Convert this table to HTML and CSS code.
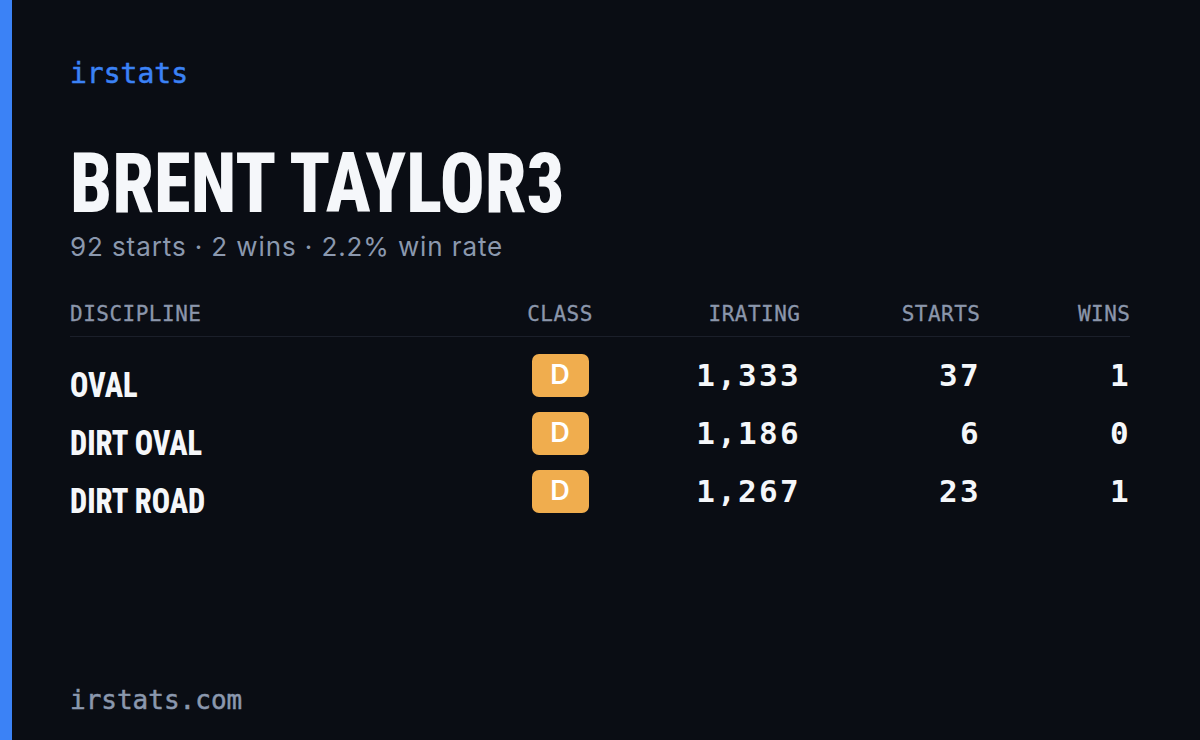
FILE: index.html
```html
<!DOCTYPE html>
<html lang="en">
<head>
<meta charset="utf-8">
<title>irstats – Brent Taylor3</title>
<link rel="stylesheet" href="styles.css">
</head>
<body>
<main class="card">
  <div class="logo">irstats</div>
  <h1 class="name">BRENT TAYLOR3</h1>
  <p class="summary">92 starts · 2 wins · 2.2% win rate</p>
  <section class="table">
    <div class="row head">
      <span class="c-disc">DISCIPLINE</span>
      <span class="c-class">CLASS</span>
      <span class="c-num">IRATING</span>
      <span class="c-num">STARTS</span>
      <span class="c-num">WINS</span>
    </div>
    <div class="body">
      <div class="row">
        <span class="c-disc disc">OVAL</span>
        <span class="c-class"><span class="badge">D</span></span>
        <span class="c-num num">1,333</span>
        <span class="c-num num">37</span>
        <span class="c-num num">1</span>
      </div>
      <div class="row">
        <span class="c-disc disc">DIRT OVAL</span>
        <span class="c-class"><span class="badge">D</span></span>
        <span class="c-num num">1,186</span>
        <span class="c-num num">6</span>
        <span class="c-num num">0</span>
      </div>
      <div class="row">
        <span class="c-disc disc">DIRT ROAD</span>
        <span class="c-class"><span class="badge">D</span></span>
        <span class="c-num num">1,267</span>
        <span class="c-num num">23</span>
        <span class="c-num num">1</span>
      </div>
    </div>
  </section>
  <footer class="footer">irstats.com</footer>
</main>
</body>
</html>
```

FILE: styles.css
```css
html, body {
  margin: 0;
  padding: 0;
  background: #0a0d14;
}

.card {
  box-sizing: border-box;
  width: 1200px;
  height: 740px;
  border-left: 12px solid #3b82f6;
  padding: 56px 70px 25px 58px;
  display: flex;
  flex-direction: column;
  color: #f5f7fa;
}

.logo {
  font-family: "DejaVu Sans Mono", "Liberation Mono", monospace;
  font-size: 28px;
  line-height: 36px;
  color: #3b82f6;
  -webkit-text-stroke: 0.5px #3b82f6;
}

.name {
  margin: 50px 0 0;
  font-family: "Roboto Condensed", Roboto, sans-serif;
  font-stretch: condensed;
  font-weight: 800;
  font-size: 84px;
  line-height: 84px;
  color: #f5f7fa;
  transform: scaleX(0.89);
  transform-origin: left center;
}

.summary {
  margin: 5px 0 0;
  font-family: Inter, "Noto Sans", sans-serif;
  font-size: 26px;
  letter-spacing: 0.9px;
  line-height: 32px;
  color: #8b98ae;
}

.table {
  margin-top: 39px;
}

.row {
  display: grid;
  grid-template-columns: 440px 100px 190px 180px 150px;
  align-items: center;
  height: 43px;
}

.head {
  height: auto;
  font-family: "DejaVu Sans Mono", "Liberation Mono", monospace;
  font-size: 21px;
  letter-spacing: 0.5px;
  line-height: 24px;
  color: #8b96ab;
  -webkit-text-stroke: 0.3px #8b96ab;
  padding-bottom: 10px;
  border-bottom: 1px solid #1b1f2a;
}

.head .c-num {
  margin-right: -0.5px;
}

.body {
  display: flex;
  flex-direction: column;
  gap: 15px;
  margin-top: 17px;
}

.c-class {
  display: flex;
  justify-content: center;
}

.c-num {
  text-align: right;
}

.disc {
  align-self: end;
  font-family: "Roboto Condensed", Roboto, sans-serif;
  font-stretch: condensed;
  font-weight: 800;
  font-size: 35px;
  line-height: 23px;
  transform: scaleX(0.87);
  transform-origin: left bottom;
}

.num {
  font-family: "DejaVu Sans Mono", "Liberation Mono", monospace;
  font-size: 31px;
  letter-spacing: 2.3px;
  margin-right: -1px;
  line-height: 43px;
  font-weight: 700;
  color: #f5f7fa;
}

.badge {
  width: 57px;
  height: 43px;
  border-radius: 7px;
  background: #f0ad4e;
  color: #ffffff;
  font-family: Inter, "Noto Sans", sans-serif;
  font-weight: 600;
  font-size: 27px;
  line-height: 42px;
  text-align: center;
}

.footer {
  margin-top: auto;
  font-family: "DejaVu Sans Mono", "Liberation Mono", monospace;
  font-size: 26px;
  line-height: 30px;
  color: #8b98ae;
  -webkit-text-stroke: 0.5px #8b98ae;
}
```
